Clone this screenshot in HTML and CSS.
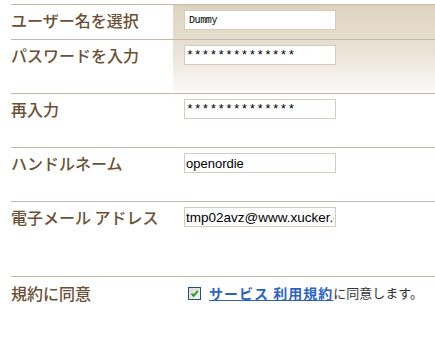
FILE: index.html
```html
<!DOCTYPE html>
<html lang="ja">
<head>
<meta charset="utf-8">
<link rel="stylesheet" href="styles.css">
</head>
<body>
<div class="form">
  <div class="row row-first">
    <div class="label">ユーザー名を選択</div>
    <div class="field field-shade1"><input class="box box-user" type="text" value="Dummy"></div>
  </div>
  <div class="row">
    <div class="label">パスワードを入力</div>
    <div class="field field-shade2"><input class="box box-pass" type="text" value="**************"></div>
  </div>
  <div class="row">
    <div class="label">再入力</div>
    <div class="field"><input class="box box-pass" type="text" value="**************"></div>
  </div>
  <div class="row">
    <div class="label">ハンドルネーム</div>
    <div class="field"><input class="box" type="text" value="openordie"></div>
  </div>
  <div class="row row-tall">
    <div class="label">電子メール アドレス</div>
    <div class="field"><input class="box box-mail" type="text" value="tmp02avz@www.xucker.com"></div>
  </div>
  <div class="row row-agree">
    <div class="label">規約に同意</div>
    <div class="field agree">
      <span class="check"><svg width="9" height="9" viewBox="0 0 9 9"><path d="M1.5 4.5 L3.5 6.8 L7.8 1.8" fill="none" stroke="#1f9a24" stroke-width="1.8"/></svg></span>
      <a class="terms" href="#">サービス 利用規約</a><span class="agree-text">に同意します。</span>
    </div>
  </div>
</div>
</body>
</html>
```
FILE: styles.css
```css
html, body {
  margin: 0;
  padding: 0;
  background: #ffffff;
}
body {
  width: 435px;
  height: 338px;
  overflow: hidden;
}
.form {
  margin: 4px 0 0 11px;
}
.row {
  display: grid;
  grid-template-columns: 162px 1fr;
  align-items: stretch;
  border-top: 1px solid #c5b8a6;
  --pb: 28px;
}
.row-first {
  --pb: 9px;
}
.row-tall {
  --pb: 49px;
}
.label {
  padding: 5px 0 var(--pb) 0;
  font-family: "Noto Sans CJK JP", "Noto Sans", sans-serif;
  font-size: 16px;
  font-weight: 500;
  line-height: 20px;
  color: #6b5034;
  white-space: nowrap;
}
.field {
  padding: 5px 0 var(--pb) 11px;
}
.field-shade1,
.field-shade2 {
  background-image: linear-gradient(to bottom, #ddd1be 0px, #e2d7c6 10px, #e4dccb 30px, #e8e0d3 40px, #ede5db 52px, #f4eee7 66px, #f8f5f1 78px, #fbfaf8 88px);
  background-size: 100% 88px;
  background-repeat: no-repeat;
}
.field-shade1 {
  background-position: 0 0;
}
.field-shade2 {
  background-position: 0 -35px;
}
.box {
  display: block;
  box-sizing: border-box;
  width: 152px;
  height: 20px;
  margin: 0;
  border: 1px solid #d5ccbc;
  background: #ffffff;
  padding: 0 1px;
  font-family: "Liberation Sans", Arial, sans-serif;
  font-size: 13px;
  color: #000000;
  outline: none;
}
.box-user {
  padding-left: 4px;
  font-family: "Liberation Mono", monospace;
  font-size: 10px;
  letter-spacing: -0.4px;
}
.box-pass {
  font-family: "Liberation Mono", monospace;
  font-size: 13px;
}
.box-mail {
  font-size: 13.5px;
}
.row-agree .label {
  padding: 6px 0 0 0;
  height: 54px;
}
.agree {
  display: flex;
  align-items: center;
  align-self: start;
  padding: 6px 0 0 15px;
  height: 20px;
  white-space: nowrap;
}
.check {
  box-sizing: border-box;
  width: 13px;
  height: 13px;
  border: 1px solid #1d5282;
  background: linear-gradient(135deg, #dcdcd4, #f6f6f2);
  display: flex;
  align-items: center;
  justify-content: center;
  margin-right: 8px;
}
.terms {
  font-family: "Noto Sans CJK JP", sans-serif;
  font-size: 14px;
  font-weight: 600;
  letter-spacing: 1px;
  color: #2b62c6;
  text-decoration: underline;
  line-height: 20px;
}
.agree-text {
  font-family: "Noto Sans CJK JP", sans-serif;
  font-size: 13px;
  color: #333333;
  line-height: 20px;
}
```
